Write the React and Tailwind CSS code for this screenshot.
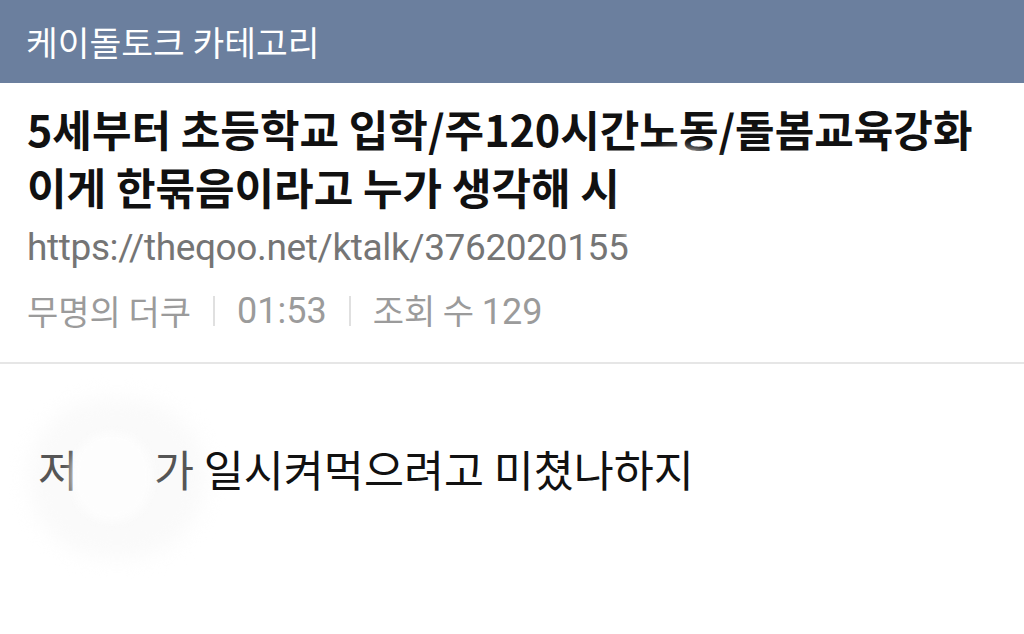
export default function App() {
  const kr = { fontFamily: '"Noto Sans CJK KR", "Noto Sans", sans-serif' };
  const ro = { fontFamily: 'Roboto, "Noto Sans", sans-serif' };
  return (
    <div className="relative w-[1024px] h-[634px] overflow-hidden bg-white" style={kr}>
      <div className="h-[83px] bg-[#6b7f9e] flex items-center pl-[26px]">
        <span className="text-white text-[34.5px] leading-none">케이돌토크 카테고리</span>
      </div>
      <div className="px-[27px] pt-[16px] pb-[30px] border-b-2 border-[#e6e6e6]">
        <div className="text-[43px] leading-[58px] font-bold text-[#111]">
          <div>5세부터 초등학교 입학/주120시간노동/돌봄교육강화</div>
          <div>이게 한묶음이라고 누가 생각해 시</div>
        </div>
        <div className="mt-[13px] text-[37px] leading-[40px] text-[#757575] tracking-[-0.01em]" style={ro}>
          https://theqoo.net/ktalk/3762020155
        </div>
        <div className="mt-[22px] flex items-center text-[34px] leading-[40px] text-[#9b9b9b]">
          <span>무명의 더쿠</span>
          <span className="mx-[22px] w-[2px] h-[30px] bg-[#e0e0e0]"></span>
          <span className="text-[36px]" style={ro}>01:53</span>
          <span className="mx-[22px] w-[2px] h-[30px] bg-[#e0e0e0]"></span>
          <span>조회 수 <span className="text-[36px]" style={ro}>129</span></span>
        </div>
      </div>
      <div className="absolute left-[28px] top-[398px] w-[178px] h-[160px] rounded-full bg-[#fafafa] blur-[10px]"></div>
      <div className="relative pl-[38px] pt-[80px] text-[43.5px] leading-[50px] text-[#111] flex items-center">
        <span className="text-[#555]">저</span>
        <span className="w-[76px] shrink-0"></span>
        <span><span className="text-[#555]">가</span> 일시켜먹으려고 미쳤나하지</span>
      </div>
      <div className="absolute left-[622px] top-[150px] w-[120px] h-[115px] rounded-full bg-white blur-[6px]"></div>
      <div className="absolute left-[72px] top-[432px] w-[80px] h-[90px] rounded-full bg-[#fdfdfd] blur-[5px]"></div>
    </div>
  );
}
